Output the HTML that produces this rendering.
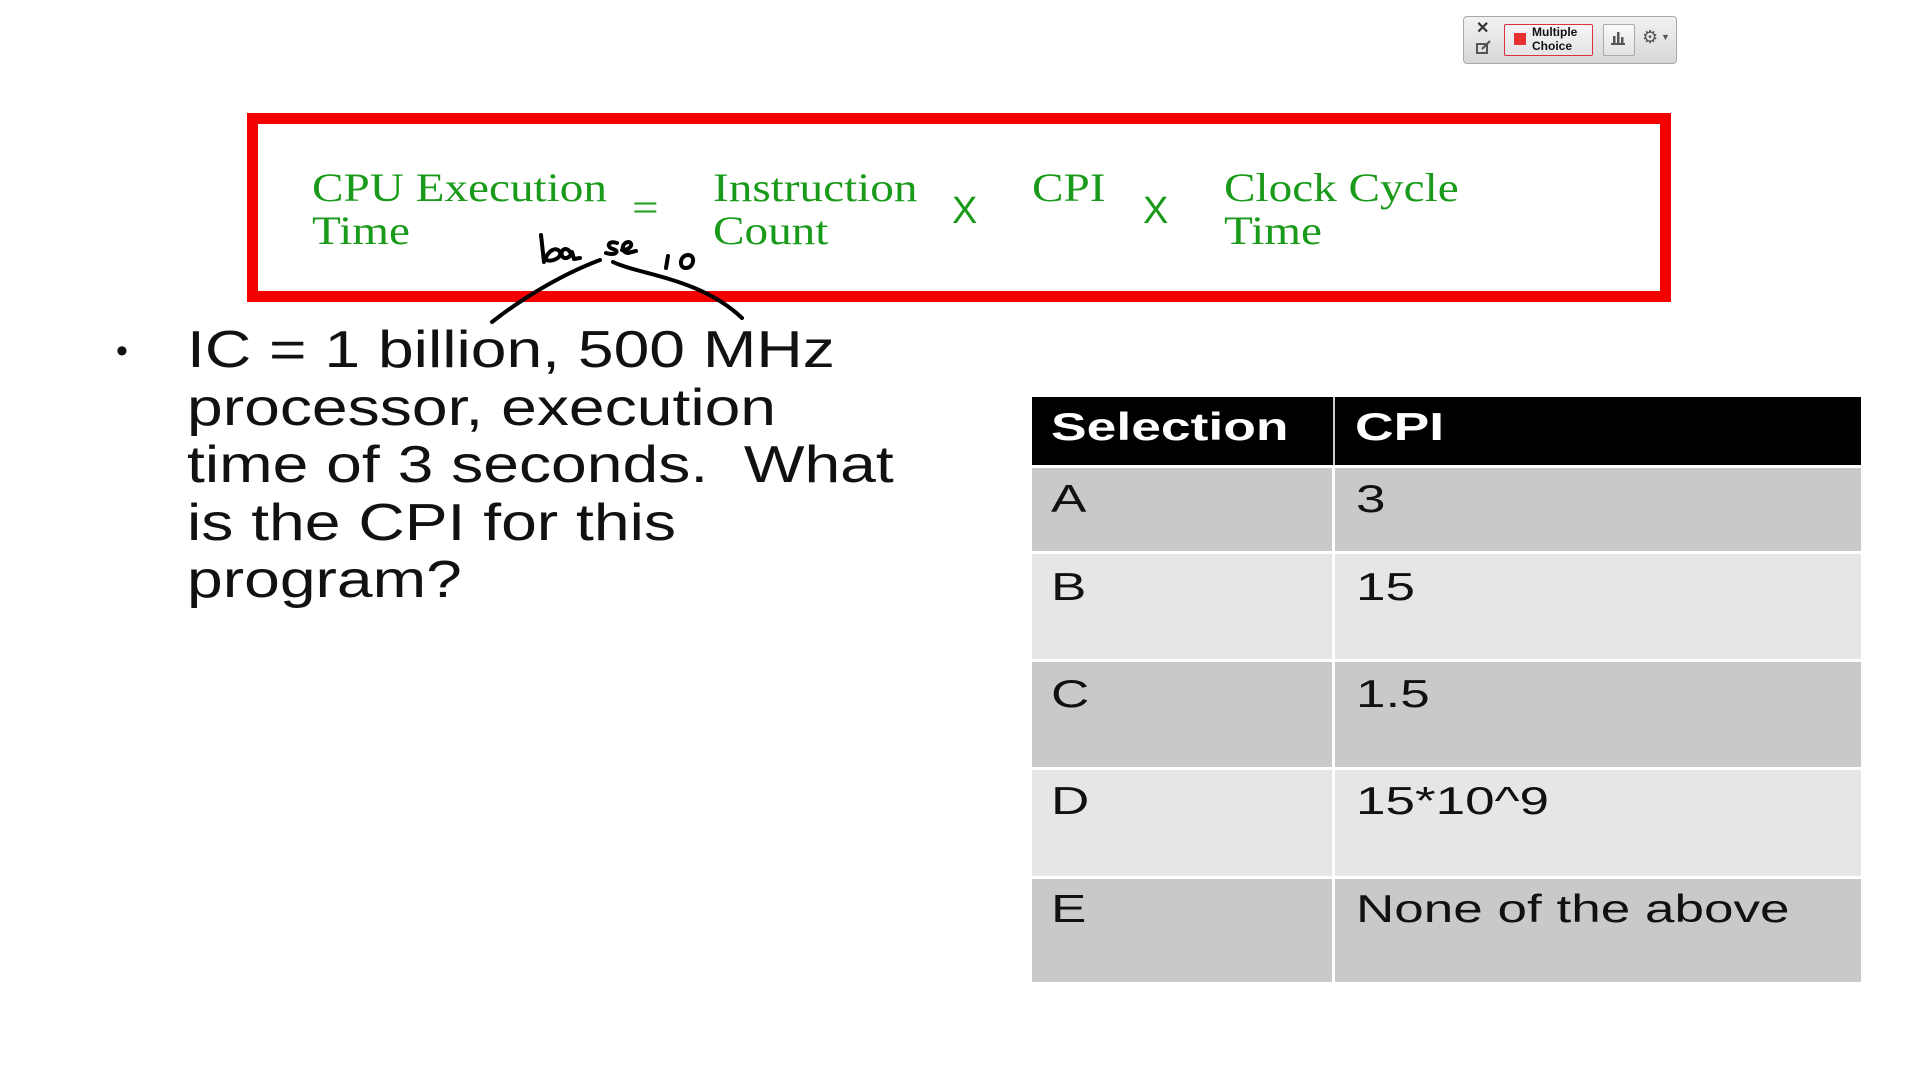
<!DOCTYPE html>
<html><head><meta charset="utf-8"><style>
html,body{margin:0;padding:0;background:#fff;}
body{width:1920px;height:1080px;position:relative;overflow:hidden;font-family:"Liberation Sans",Arial,sans-serif;}
.a{position:absolute;white-space:nowrap;}
.g{font-family:"Liberation Serif",serif;color:#1a9a1a;font-size:40px;line-height:43px;transform:scaleX(1.18);transform-origin:0 0;}
.bx{position:absolute;left:247px;top:113px;width:1402px;height:167px;border:11px solid #f30000;}
.b{font-size:52px;line-height:57.5px;color:#111;transform:scaleX(1.235);transform-origin:0 0;}
.row{position:absolute;left:1032px;width:829px;}
.c1,.c2{position:absolute;top:0;bottom:0;}
.c1{left:0;width:300px;}
.c2{left:303px;right:0;}
.t{position:absolute;font-size:39px;color:#111;transform:scaleX(1.36);transform-origin:0 0;white-space:nowrap;}
.h{font-weight:bold;color:#fff;transform:scaleX(1.37);}
</style></head><body>

<!-- toolbar -->
<div class="a" style="left:1463px;top:16px;width:212px;height:46px;border:1px solid #a8a8a8;border-radius:4px;background:linear-gradient(#f2f2f2,#d8d8d8);"></div>
<div class="a" style="left:1476px;top:18px;font-size:16px;font-weight:bold;color:#333;">✕</div>
<svg class="a" style="left:1476px;top:40px" width="16" height="14"><rect x="1" y="4" width="10" height="9" fill="none" stroke="#555" stroke-width="2"/><path d="M6 9 L14 1" stroke="#555" stroke-width="2"/></svg>
<div class="a" style="left:1504px;top:24px;width:87px;height:30px;border:1px solid #e03040;border-radius:2px;background:linear-gradient(#f6f6f6,#e4e4e4);"></div>
<div class="a" style="left:1514px;top:33px;width:12px;height:12px;background:#e83030;"></div>
<div class="a" style="left:1532px;top:25px;font-size:12px;font-weight:bold;line-height:14px;color:#111;">Multiple<br>Choice</div>
<div class="a" style="left:1603px;top:24px;width:30px;height:30px;border:1px solid #aaa;border-radius:2px;background:linear-gradient(#fafafa,#e2e2e2);"></div>
<svg class="a" style="left:1608px;top:29px" width="20" height="20"><path d="M3 15h14" stroke="#555" stroke-width="2"/><rect x="5" y="7" width="2.5" height="7" fill="#555"/><rect x="9" y="3" width="2.5" height="11" fill="#555"/><rect x="13" y="8" width="2.5" height="6" fill="#555"/></svg>
<div class="a" style="left:1642px;top:27px;font-size:18px;color:#555;">⚙</div>
<div class="a" style="left:1661px;top:32px;font-size:9px;color:#555;">▼</div>

<!-- formula box -->
<div class="bx"></div>
<div class="a g" style="left:312px;top:166px;">CPU Execution<br>Time</div>
<div class="a g" style="left:632px;top:186px;">=</div>
<div class="a g" style="left:713px;top:166px;">Instruction<br>Count</div>
<div class="a" style="left:952px;top:190px;font-size:38px;color:#1a9a1a;">X</div>
<div class="a g" style="left:1032px;top:166px;">CPI</div>
<div class="a" style="left:1143px;top:190px;font-size:38px;color:#1a9a1a;">X</div>
<div class="a g" style="left:1224px;top:166px;">Clock Cycle<br>Time</div>

<!-- handwriting -->
<svg class="a" style="left:0;top:0" width="1920" height="400">
<g fill="none" stroke="#000" stroke-width="4" stroke-linecap="round" stroke-linejoin="round">
<path d="M492 322 C520 300 560 275 600 260"/>
<path d="M613 262 C640 275 700 278 742 318"/>
<path d="M541 235 L544 262 C548 250 556 246 560 252 C562 258 552 262 546 260"/>
<path d="M570 252 C566 246 560 250 562 256 C565 260 570 258 572 252 L574 259 L580 258"/>
<path d="M617 243 C608 240 606 247 613 249 C620 251 616 256 606 253"/>
<path d="M622 250 C630 250 634 244 629 242 C622 242 620 252 628 253 L636 251"/>
<path d="M668 256 L666 268"/>
<path d="M688 255 C680 255 678 268 686 268 C694 268 696 255 688 255"/>
</g></svg>

<!-- bullet -->
<div class="a" style="left:116px;top:332px;font-size:34px;color:#111;">•</div>
<div class="a b" style="left:187px;top:322px;">IC = 1 billion, 500 MHz<br>processor, execution<br>time of 3 seconds.&nbsp; What<br>is the CPI for this<br>program?</div>

<!-- table -->
<div class="row" style="top:397px;height:68px;background:#000;">
 <div class="c1"></div><div class="a" style="left:301px;top:0;width:2px;height:68px;background:#ccc;"></div>
 <div class="t h" style="left:19px;top:9px;">Selection</div>
 <div class="t h" style="left:323px;top:9px;">CPI</div>
</div>
<div class="row" style="top:468px;height:83px;">
 <div class="c1" style="background:#c9c9c9"></div><div class="c2" style="background:#c9c9c9"></div>
 <div class="t" style="left:19px;top:10px;">A</div><div class="t" style="left:324px;top:10px;">3</div>
</div>
<div class="row" style="top:554px;height:105px;">
 <div class="c1" style="background:#e6e6e6"></div><div class="c2" style="background:#e6e6e6"></div>
 <div class="t" style="left:19px;top:12px;">B</div><div class="t" style="left:324px;top:12px;">15</div>
</div>
<div class="row" style="top:662px;height:105px;">
 <div class="c1" style="background:#c9c9c9"></div><div class="c2" style="background:#c9c9c9"></div>
 <div class="t" style="left:19px;top:11px;">C</div><div class="t" style="left:324px;top:11px;">1.5</div>
</div>
<div class="row" style="top:770px;height:106px;">
 <div class="c1" style="background:#e6e6e6"></div><div class="c2" style="background:#e6e6e6"></div>
 <div class="t" style="left:19px;top:10px;">D</div><div class="t" style="left:324px;top:10px;">15*10^9</div>
</div>
<div class="row" style="top:879px;height:103px;">
 <div class="c1" style="background:#c9c9c9"></div><div class="c2" style="background:#c9c9c9"></div>
 <div class="t" style="left:19px;top:9px;">E</div><div class="t" style="left:324px;top:9px;">None of the above</div>
</div>
</body></html>
